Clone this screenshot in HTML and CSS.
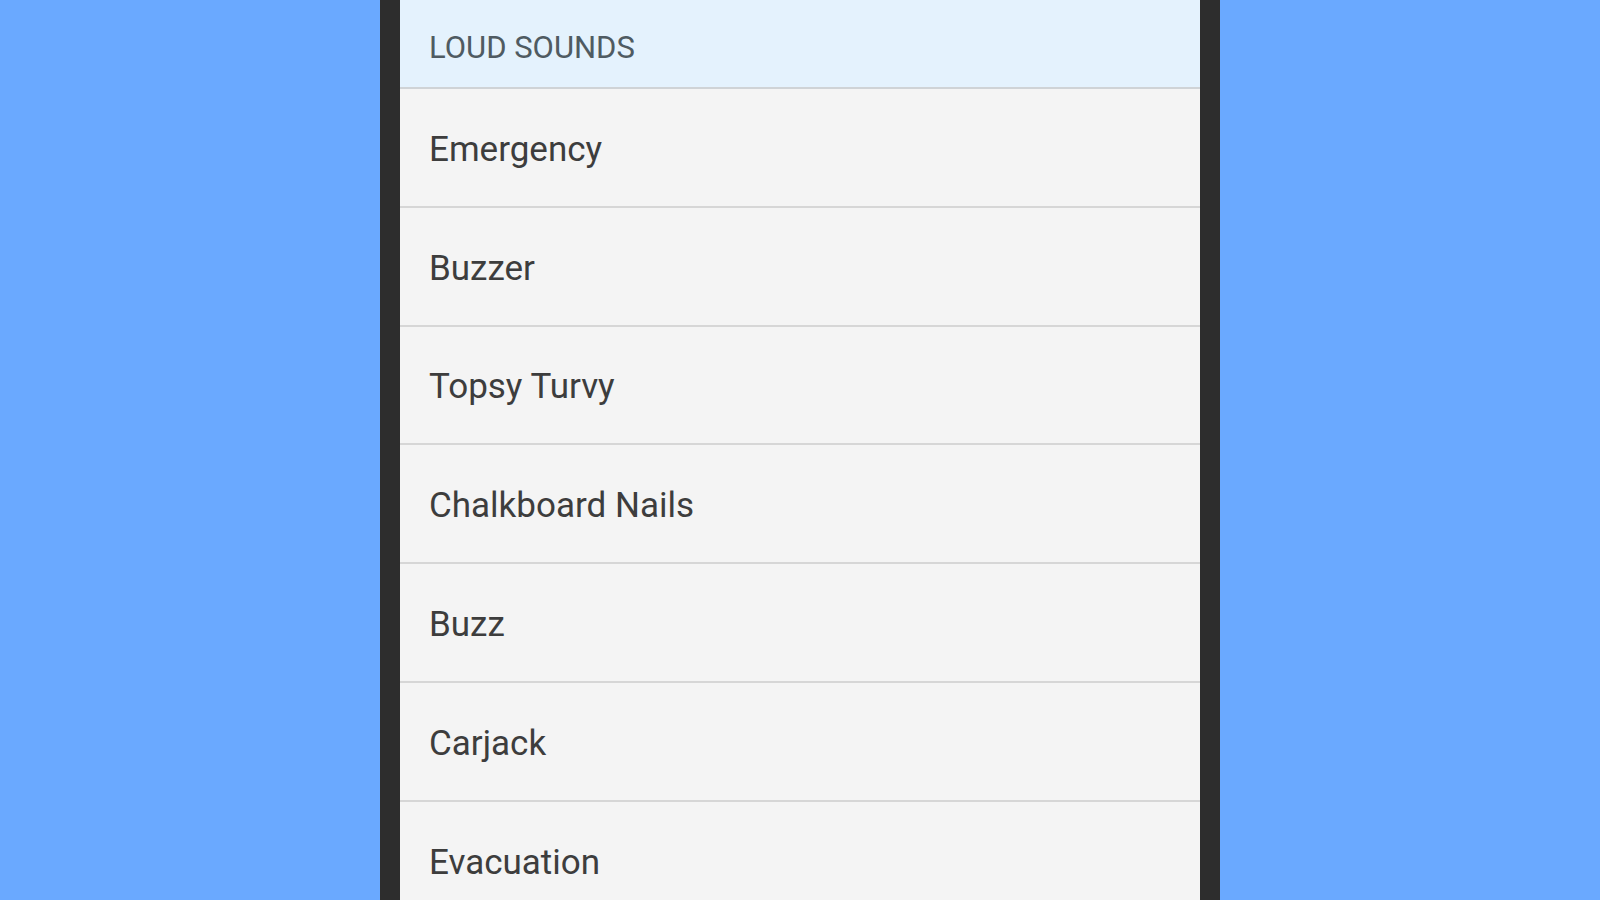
FILE: index.html
```html
<!DOCTYPE html>
<html>
<head>
<meta charset="utf-8">
<link rel="stylesheet" href="styles.css">
</head>
<body>
<div class="stage">
  <div class="phone">
    <div class="list">
      <div class="header">LOUD SOUNDS</div>
      <div class="row">Emergency</div>
      <div class="row">Buzzer</div>
      <div class="row">Topsy Turvy</div>
      <div class="row">Chalkboard Nails</div>
      <div class="row">Buzz</div>
      <div class="row">Carjack</div>
      <div class="row">Evacuation</div>
    </div>
  </div>
</div>
</body>
</html>
```
FILE: styles.css
```css
html, body {
  margin: 0;
  padding: 0;
  height: 100%;
  overflow: hidden;
}
body {
  background: #6aa9ff;
  font-family: Roboto, "Noto Sans", sans-serif;
}
.stage {
  display: flex;
  justify-content: center;
  height: 900px;
}
.phone {
  width: 800px;
  padding: 0 20px;
  background: #2d2d2d;
  height: 900px;
  overflow: hidden;
}
.list {
  display: flex;
  flex-direction: column;
  background: #f4f4f4;
  height: 100%;
}
.header {
  flex: none;
  height: 89px;
  box-sizing: border-box;
  border-bottom: 2px solid #cfd3d6;
  background: #e4f2fd;
  color: #4f5b62;
  font-size: 31px;
  display: flex;
  align-items: center;
  padding-left: 29px;
  padding-top: 7px;
}
.row {
  flex: none;
  height: 118.8px;
  box-sizing: border-box;
  border-bottom: 2px solid #d6d6d6;
  color: #3d3d3d;
  font-size: 35px;
  display: flex;
  align-items: center;
  padding-left: 29px;
  padding-top: 4px;
}
```
